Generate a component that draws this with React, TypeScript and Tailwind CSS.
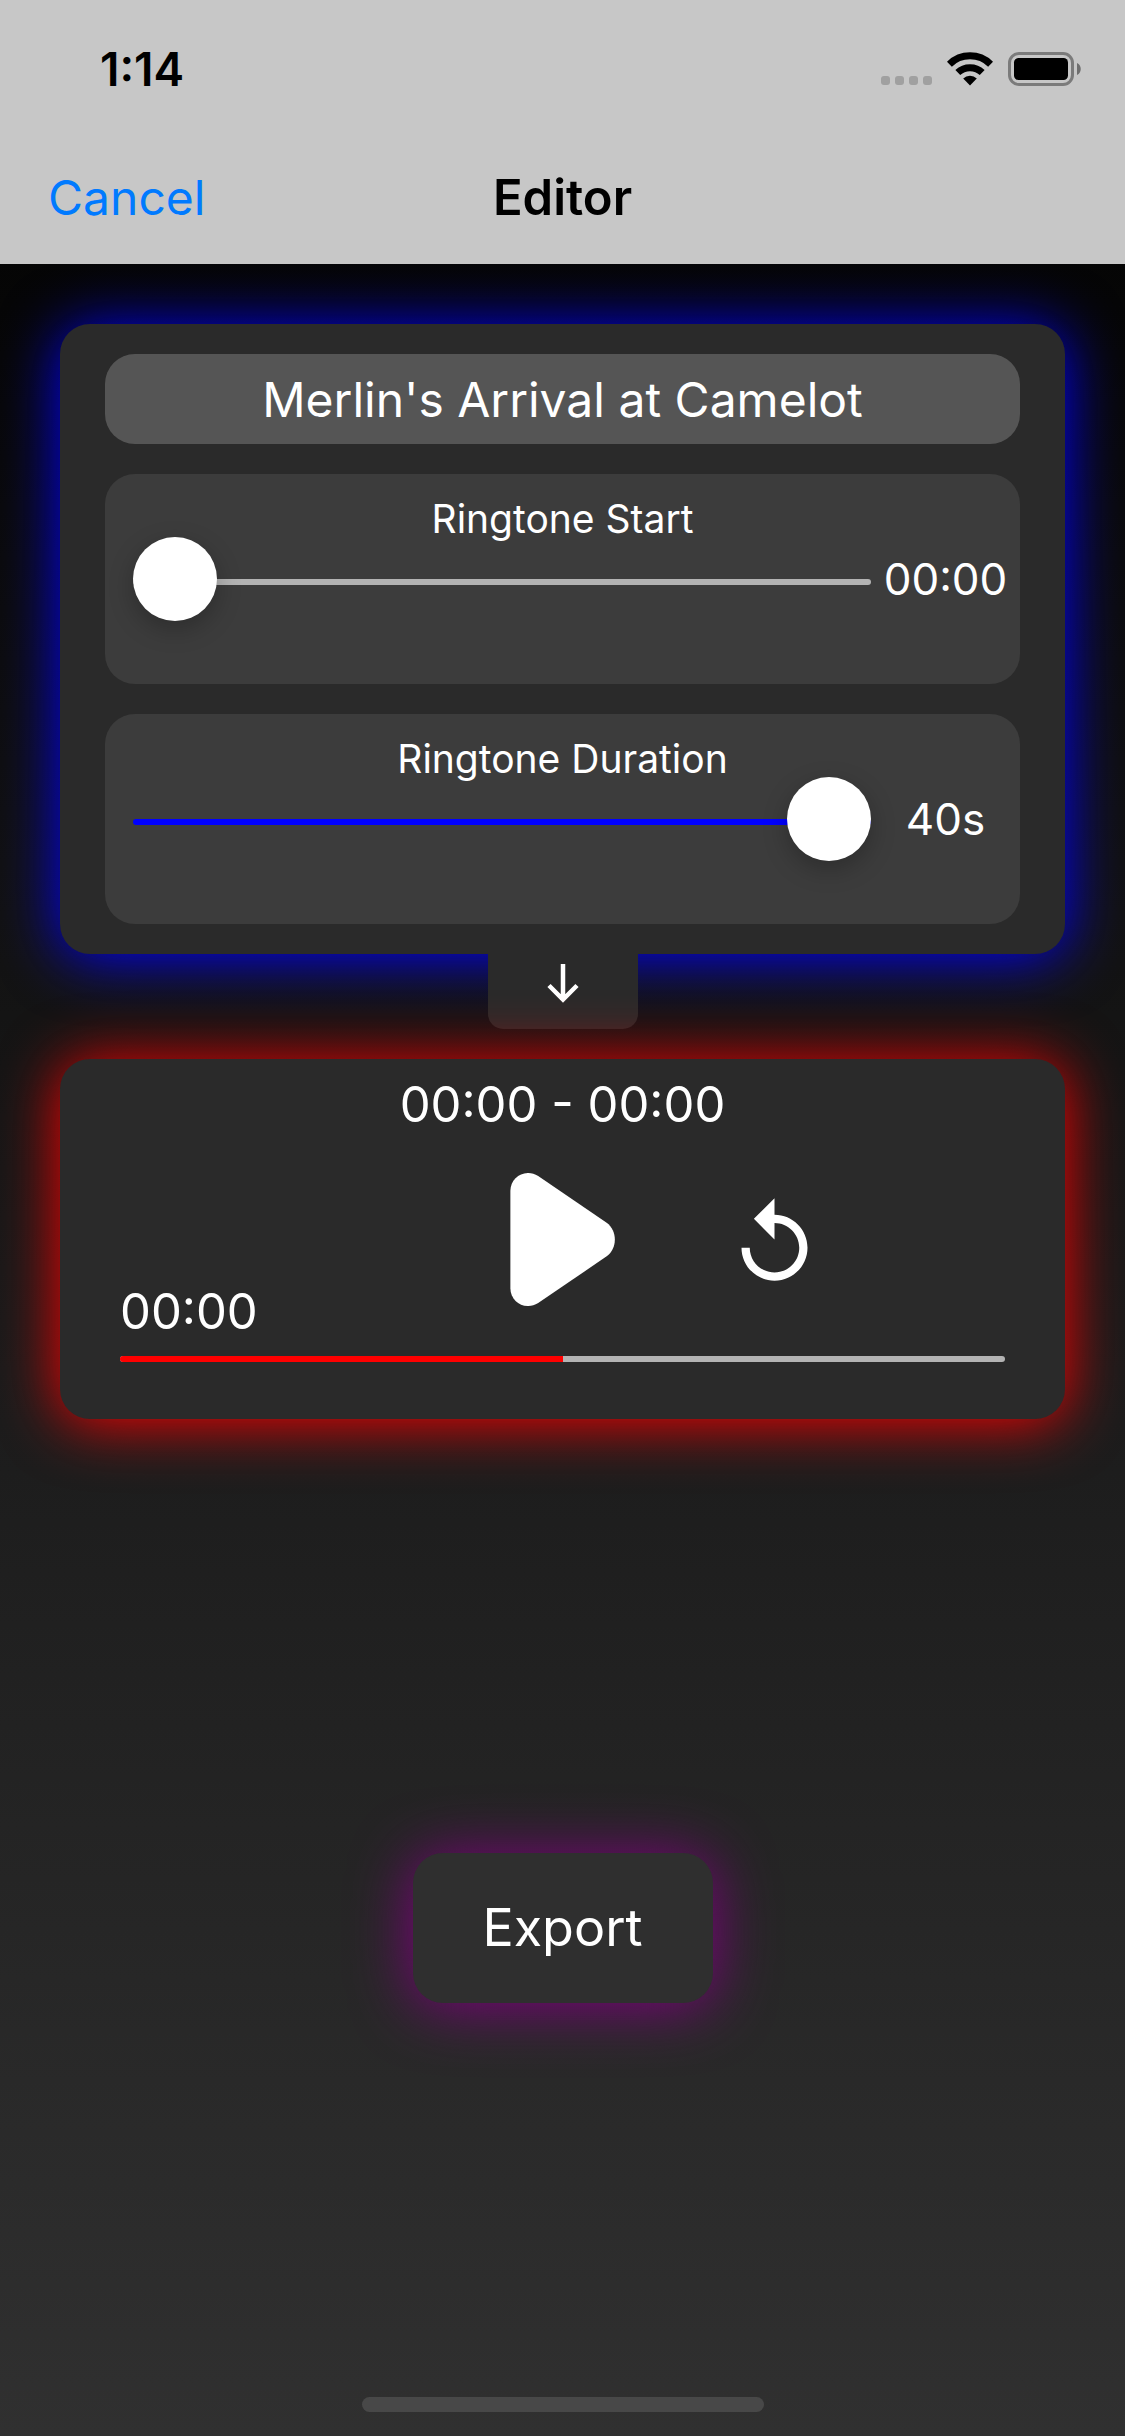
const sliderBase =
  "block h-[84px] min-w-0 flex-1 cursor-pointer appearance-none bg-transparent [&::-webkit-slider-runnable-track]:h-[6px] [&::-webkit-slider-runnable-track]:rounded-full [&::-webkit-slider-thumb]:-mt-[42px] [&::-webkit-slider-thumb]:size-[84px] [&::-webkit-slider-thumb]:appearance-none [&::-webkit-slider-thumb]:rounded-full [&::-webkit-slider-thumb]:bg-white [&::-webkit-slider-thumb]:shadow-[0_8px_24px_rgba(0,0,0,0.25)]";

function StatusBar() {
  return (
    <div className="flex h-[138px] items-center justify-between pl-[100px] pr-[44px]">
      <span className="text-[46px] leading-[60px] font-semibold">1:14</span>
      <div className="flex items-center">
        <div className="mt-[23px] flex gap-[5px]">
          {[0, 1, 2, 3].map((n) => (
            <span key={n} className="size-[9px] rounded-[3px] bg-[#a0a0a0]" />
          ))}
        </div>
        <svg className="ml-[15px] h-[34px] w-[46px]" viewBox="0 0 46 34" aria-hidden="true">
          <g fill="none" stroke="#000" strokeWidth="7">
            <path d="M2.4 12.2a29.5 29.5 0 0 1 41.2 0" />
            <path d="M10.8 20.6a17.5 17.5 0 0 1 24.4 0" />
          </g>
          <path d="M23 33.5l-6.8-6.9a9.6 9.6 0 0 1 13.6 0z" />
        </svg>
        <svg className="ml-[15px] h-[34px] w-[73px]" viewBox="0 0 73 34" aria-hidden="true">
          <rect x="1.5" y="1.5" width="63" height="31" rx="9.5" fill="none" stroke="#7b7b7b" strokeWidth="3" />
          <rect x="6" y="6" width="54" height="22" rx="4.5" />
          <path d="M69 11c5 2 5 10 0 12z" fill="#6f6f6f" />
        </svg>
      </div>
    </div>
  );
}

export default function App() {
  return (
    <div className="flex min-h-screen flex-col bg-linear-to-b/srgb from-black to-[#303030] font-['Inter',sans-serif] text-white">
      <header className="relative z-10 bg-[#c7c7c7] text-black">
        <StatusBar />
        <nav className="grid h-[126px] grid-cols-[1fr_auto_1fr] items-start px-[48px] pt-[30px] leading-[60px]">
          <button type="button" className="justify-self-start text-[48px] text-[#007aff]">
            Cancel
          </button>
          <h1 className="text-[49px] font-semibold">Editor</h1>
        </nav>
      </header>

      <main className="flex flex-1 flex-col px-[60px] pt-[60px]">
        <section className="flex flex-col gap-[30px] rounded-[30px] bg-[#2a2a2a] px-[45px] py-[30px] shadow-[0_3px_60px_#0000ff]">
          <input
            type="text"
            aria-label="Ringtone name"
            defaultValue="Merlin's Arrival at Camelot"
            className="h-[90px] w-full rounded-[30px] bg-[#555555] text-center text-[48px] leading-[60px] outline-none"
          />
          <div className="h-[210px] rounded-[30px] bg-[#3c3c3c] pt-[15px]">
            <label htmlFor="start" className="block text-center text-[39px] leading-[60px]">
              Ringtone Start
            </label>
            <div className="-mt-[9px] flex items-center pl-[28px]">
              <input
                id="start"
                type="range"
                min={0}
                max={100}
                defaultValue={0}
                className={sliderBase + " [&::-webkit-slider-runnable-track]:bg-[#b3b3b3]"}
              />
              <output htmlFor="start" className="mb-[6px] w-[149px] text-center text-[44px] leading-[60px]">
                00:00
              </output>
            </div>
          </div>
          <div className="h-[210px] rounded-[30px] bg-[#3c3c3c] pt-[15px]">
            <label htmlFor="duration" className="block text-center text-[39px] leading-[60px]">
              Ringtone Duration
            </label>
            <div className="-mt-[9px] flex items-center pl-[28px]">
              <input
                id="duration"
                type="range"
                min={1}
                max={40}
                defaultValue={40}
                className={sliderBase + " [&::-webkit-slider-runnable-track]:bg-[#0000ff]"}
              />
              <output htmlFor="duration" className="mb-[6px] w-[149px] text-center text-[44px] leading-[60px]">
                40s
              </output>
            </div>
          </div>
        </section>

        <div className="flex h-[75px] w-[150px] justify-center self-center rounded-b-[15px] bg-[#2a2a2a] pt-[9px]">
          <svg className="h-[40px] w-[32px]" viewBox="0 0 32 40" fill="none" stroke="#fff" strokeWidth="4.5" aria-hidden="true">
            <path d="M16 1v35M2 22.5l14 14 14-14" />
          </svg>
        </div>

        <section className="mt-[30px] rounded-[30px] bg-[#2a2a2a] px-[60px] pt-[16px] pb-[57px] shadow-[0_3px_60px_#ff0000]">
          <p className="text-center text-[49px] leading-[60px]">00:00 - 00:00</p>
          <div className="mt-[38px] grid h-[169px] grid-cols-[1fr_auto_1fr]">
            <time className="self-end text-[49px] leading-[60px]">00:00</time>
            <button type="button" aria-label="Play" className="self-start">
              <svg className="block h-[133px] w-[105px]" viewBox="0 0 105 134" fill="#fff">
                <path d="M0 18C0 4 15-5 28 3L97 50C108 58 108 76 97 84L28 131C15 139 0 130 0 116Z" />
              </svg>
            </button>
            <button type="button" aria-label="Replay" className="mt-[21px] ml-[110px] self-start justify-self-start">
              <svg className="block size-[99px]" viewBox="0 0 24 24" fill="#fff">
                <path d="M12 5V1L7 6l5 5V7c3.31 0 6 2.69 6 6s-2.69 6-6 6-6-2.69-6-6H4c0 4.42 3.58 8 8 8s8-3.58 8-8-3.58-8-8-8z" />
              </svg>
            </button>
          </div>
          <div
            role="progressbar"
            aria-label="Playback position"
            aria-valuenow={50}
            className="mt-[14px] h-[6px] overflow-hidden rounded-full bg-[#b3b3b3]"
          >
            <div className="h-full w-1/2 bg-[#ff0000]" />
          </div>
        </section>

        <button
          type="button"
          className="mt-[434px] h-[150px] w-[300px] self-center rounded-[30px] bg-[#2f2f2f] text-[52px] leading-[60px] shadow-[0_3px_60px_#800080]"
        >
          Export
        </button>
      </main>

      <footer className="flex justify-center pb-[24px]">
        <div className="h-[15px] w-[402px] rounded-full bg-[#484848]" />
      </footer>
    </div>
  );
}
